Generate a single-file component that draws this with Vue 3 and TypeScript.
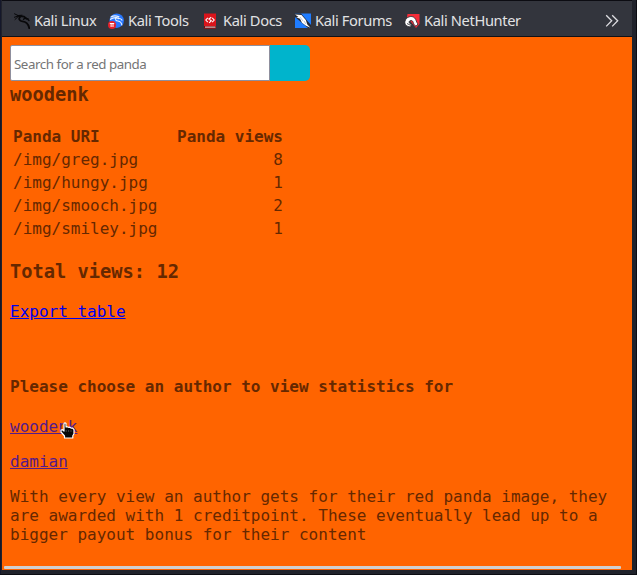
<script setup lang="ts">
interface Bookmark {
  label: string
  icon: string
}

interface PandaRow {
  uri: string
  views: number
}

const bookmarks: Bookmark[] = [
  { label: 'Kali Linux', icon: 'linux' },
  { label: 'Kali Tools', icon: 'tools' },
  { label: 'Kali Docs', icon: 'docs' },
  { label: 'Kali Forums', icon: 'forums' },
  { label: 'Kali NetHunter', icon: 'nethunter' },
]

const rows: PandaRow[] = [
  { uri: '/img/greg.jpg', views: 8 },
  { uri: '/img/hungy.jpg', views: 1 },
  { uri: '/img/smooch.jpg', views: 2 },
  { uri: '/img/smiley.jpg', views: 1 },
]

const authors: string[] = ['woodenk', 'damian']
</script>

<template>
  <div class="window">
    <nav class="bookmarks">
      <div v-for="b in bookmarks" :key="b.label" class="bookmark" :class="b.icon">
        <svg class="icon" viewBox="0 0 16 16" width="16" height="16">
          <g v-if="b.icon === 'linux'" fill="none" stroke="#08080a" stroke-linecap="round">
            <path d="M.5 .8 4 2.500 8 2.200M.3 4.300l4-1.500M1 6.500l3-2.800" stroke-width="1" />
            <path d="M4 2.900 10 3.600l2.500 2" stroke-width="1.800" />
            <path d="M6.500 3.500C4 5.500 5.500 8 8.500 8.400c3.200.4 5.800 2 6.800 6.800" stroke-width="1.800" />
            <path d="M9.500 6.300c1.500-1.500 3.500-1 5.500 1.200M12 5.500l2.200.3" stroke-width="1.300" />
          </g>
          <g v-else-if="b.icon === 'tools'">
            <circle cx="8.700" cy="7.700" r="7.200" fill="#2777ff" />
            <path d="M3 4c3-2 5-1.500 8-.3M2.500 6.300c3-2.300 5-2 8-1.300M8.500 4.500c-2 2-.5 3.300 1.500 3.500 2 .3 3.500 1.500 3.800 4M10 5.800c2-.8 3 0 4 1.300" fill="none" stroke="#e8f1ff" stroke-width="1.100" stroke-linecap="round" />
            <circle cx="4" cy="12" r="4" fill="#e3202b" />
            <path d="M1.800 10.500h4.400M3.100 10.500v3.500M5 10.500v3.500" fill="none" stroke="#fff" stroke-width="1" />
          </g>
          <g v-else-if="b.icon === 'docs'">
            <path d="M1 .500h12v15H1z" fill="#d9141b" />
            <path d="M1 13h12v2.500H1z" fill="#700d12" />
            <path d="M2 13.600h10.500v1H2z" fill="#f2dede" />
            <path d="M4.800 4.800 2.800 7l2 2.200M9.200 4.800l2 2.200-2 2.200M8.300 4.200 5.900 6l2.400 1.800-2.200 2" fill="none" stroke="#fff" stroke-width="1.100" />
          </g>
          <g v-else-if="b.icon === 'forums'">
            <path d="M0 .500h16V15H0z" fill="#1f7cff" />
            <path d="M0 .500h6L16 12v3h-3L0 4z" fill="#252a35" />
            <path d="M0 1.500 6.500 2l4.300 5 1.500 4.500 3.200 3.200-4.500-2-4-3-2-4L1 4.200l2.500-.2z" fill="#fff" />
            <path d="m5 4 3 4M9 8l2 3" stroke="#9fabc0" stroke-width=".7" />
          </g>
          <g v-else>
            <path d="M3.500 1h12v10L12 15 3 4z" fill="#f52c38" />
            <path d="M1 8.200C2 4 7.500 2 10.500 4.800c2 2 1.500 4.200 3.500 6.200l-2 2.200C8.500 11.500 10 7.300 7 7.500c-2.800.2-2.500 3.300 1 4l-1.300 2.300C2.500 14 .2 11.200 1 8.200z" fill="#fff" stroke="#232329" stroke-width=".8" />
            <path d="m3 10.500 4 2" stroke="#242429" stroke-width=".8" />
          </g>
        </svg>
        <span class="label">{{ b.label }}</span>
      </div>
      <svg class="more" viewBox="0 0 14 14" width="14" height="14">
        <path d="m1.200 1.200 5.500 5.600-5.500 5.600M7.200 1.200l5.500 5.600-5.500 5.600" fill="none" stroke="#dedee2" stroke-width="1.300" />
      </svg>
    </nav>

    <main class="page">
      <form class="search" @submit.prevent>
        <input type="text" placeholder="Search for a red panda" />
        <button type="submit" aria-label="Search"></button>
      </form>
      <h3 class="author">woodenk</h3>
      <table>
        <thead>
          <tr><th>Panda URI</th><th class="views">Panda views</th></tr>
        </thead>
        <tbody>
          <tr v-for="r in rows" :key="r.uri">
            <td>{{ r.uri }}</td>
            <td class="views">{{ r.views }}</td>
          </tr>
        </tbody>
      </table>
      <h3 class="total">Total views: 12</h3>
      <a class="export" href="#">Export table</a>
      <h4>Please choose an author to view statistics for</h4>
      <p v-for="a in authors" :key="a" class="choice">
        <a class="visited" href="#">{{ a }}</a>
        <svg v-if="a === 'woodenk'" class="pointer" viewBox="0 0 16 17" width="16" height="17">
          <path d="M4 1.500Q5 .3 6 1.500V5l1-.3 1.500.6 1.500-.2 1 1 1.700.1 1.300 1.500v4l-1.200 2V16H4.500v-2L1 10V8l1.500-.3L4 9z" fill="#080808" stroke="#fff" stroke-width="1.200" stroke-linejoin="round" />
          <path d="M6.200 8v2M8.600 8v2M11 8v2" stroke="#666" stroke-width=".6" />
        </svg>
      </p>
      <p class="note">
        With every view an author gets for their red panda image, they are awarded with 1 creditpoint. These eventually lead up to a bigger payout bonus for their content
      </p>
      <div class="scrollbar"></div>
    </main>
  </div>
</template>

<style>
body {
  margin: 0;
  overflow: hidden;
  background: #20222b;
}
</style>

<style scoped>
.window {
  box-sizing: border-box;
  width: 637px;
  height: 575px;
  padding: 0 5px 5px 2px;
  background: #20222b;
  box-shadow: inset -1px -1px #0b0c12, inset 1px 0 #14172a;
}

.bookmarks {
  box-sizing: border-box;
  display: flex;
  align-items: center;
  height: 37px;
  padding: 5px 13px 0 12px;
  background: #33353d;
  border-top: 1px solid #0c0c12;
  border-bottom: 1px solid #101116;
  color: #e2e2e4;
  font: 14.667px/20px "Noto Sans", sans-serif;
  letter-spacing: -0.37px;
}

.bookmark {
  display: flex;
  align-items: center;
  gap: 4px;
  flex: none;
  white-space: nowrap;
}

.linux { width: 94px; }
.tools { width: 95px; }
.docs { width: 92px; }
.forums { width: 109px; }

.icon {
  flex: none;
}

.label {
  padding-bottom: 2px;
}

.more {
  margin-left: auto;
}

.page {
  box-sizing: border-box;
  display: flex;
  flex-direction: column;
  align-items: flex-start;
  height: 533px;
  padding: 8px 12px 1px 8px;
  background: #ff6400;
  color: #662800;
  font: 16px/19px "DejaVu Sans Mono", monospace;
}

.search {
  display: flex;
  height: 36px;
}

.search input {
  box-sizing: border-box;
  width: 260px;
  height: 36px;
  margin: 0;
  padding: 3px 3px 1px;
  border: 1px solid #8f8f9d;
  border-radius: 2px 0 0 2px;
  background: #fff;
  font: 13.333px "Noto Sans", sans-serif;
  letter-spacing: -0.45px;
}

.search input::placeholder {
  color: #757575;
}

.search button {
  width: 40px;
  height: 36px;
  padding: 0;
  border: 0;
  border-radius: 0 5px 5px 0;
  background: #00b4cc;
}

h3 {
  margin: 0;
  font-size: 18.72px;
  line-height: 22px;
}

.author {
  margin: 3px 0 18px;
}

table {
  width: 276px;
  border-spacing: 2px;
}

th,
td {
  padding: 1px;
  text-align: left;
}

.views {
  width: 106px;
  text-align: right;
  white-space: nowrap;
}

.total {
  margin: 20px 0 19px;
}

.export {
  color: #0000ee;
}

h4 {
  margin: 56px 0 21px;
  font-size: 16px;
}

p {
  margin: 0 0 16px;
}

.choice {
  position: relative;
}

.visited {
  color: #551a8b;
}

.pointer {
  position: absolute;
  left: 50px;
  top: 5px;
}

.note {
  width: 602px;
}

.scrollbar {
  width: 617px;
  height: 3px;
  margin: auto 0 0 -6px;
  border-radius: 1px;
  background: #d0cfcf;
}
</style>
